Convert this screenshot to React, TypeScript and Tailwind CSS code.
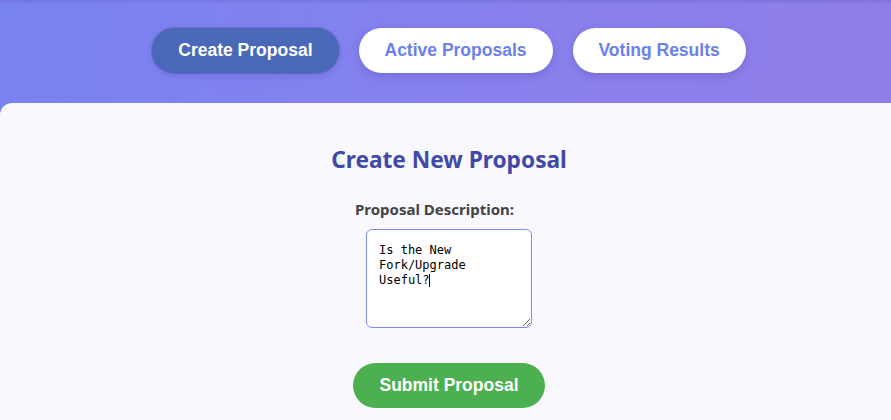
import React from "react";

export default function App() {
  const btn =
    "h-[45px] rounded-full px-[26px] text-[17.5px] font-bold font-['Liberation_Sans',Arial,sans-serif] flex items-center justify-center";
  return (
    <div className="w-[891px] h-[420px] overflow-hidden bg-[linear-gradient(100deg,#7883f2_0%,#8a80ec_60%,#917de6_100%)] flex flex-col">
      <div className="h-[4px] bg-[linear-gradient(to_bottom,rgba(90,90,190,0.35),rgba(90,90,190,0))]" />
      <div className="flex justify-center gap-[20px] pt-[24px] pb-[30px] pl-[7px]">
        <button className={`${btn} px-[25px] bg-[#4a68b8] text-white shadow-[0_0_0_1px_rgba(60,80,160,0.35),0_2px_6px_rgba(40,40,120,0.2)]`}>
          Create Proposal
        </button>
        <button className={`${btn} bg-white text-[#6b80ee] shadow-[0_3px_8px_rgba(60,50,150,0.25)]`}>
          Active Proposals
        </button>
        <button className={`${btn} bg-white text-[#6b80ee] shadow-[0_3px_8px_rgba(60,50,150,0.25)]`}>
          Voting Results
        </button>
      </div>
      <div className="flex-1 bg-[#f8f8fe] rounded-tl-[12px] flex flex-col items-center pt-[42px] pl-[7px]">
        <h2 className="text-[22.7px] leading-[30px] font-bold text-[#4049a8] font-['Noto_Sans',sans-serif]">
          Create New Proposal
        </h2>
        <div className="mt-[24px] flex flex-col items-center">
          <label className="self-start -ml-[11px] text-[15px] leading-[20px] font-bold text-[#444] font-['Noto_Sans',sans-serif]">
            Proposal Description:
          </label>
          <div className="relative mt-[10px]">
            <textarea
              className="block w-[166px] h-[99px] border border-[#7b8cf0] rounded-[6px] bg-white px-[12px] pt-[13px] pb-[10px] text-[12px] leading-[15px] font-['DejaVu_Sans_Mono',monospace] text-black outline-none resize-y"
              defaultValue="Is the New Fork/Upgrade Useful?"
            />
            <span className="absolute left-[63px] top-[45px] w-[1px] h-[13px] bg-black" />
          </div>
        </div>
        <button className={`${btn} mt-[35px] px-[25px] bg-[#4caf50] text-white`}>
          Submit Proposal
        </button>
      </div>
    </div>
  );
}
